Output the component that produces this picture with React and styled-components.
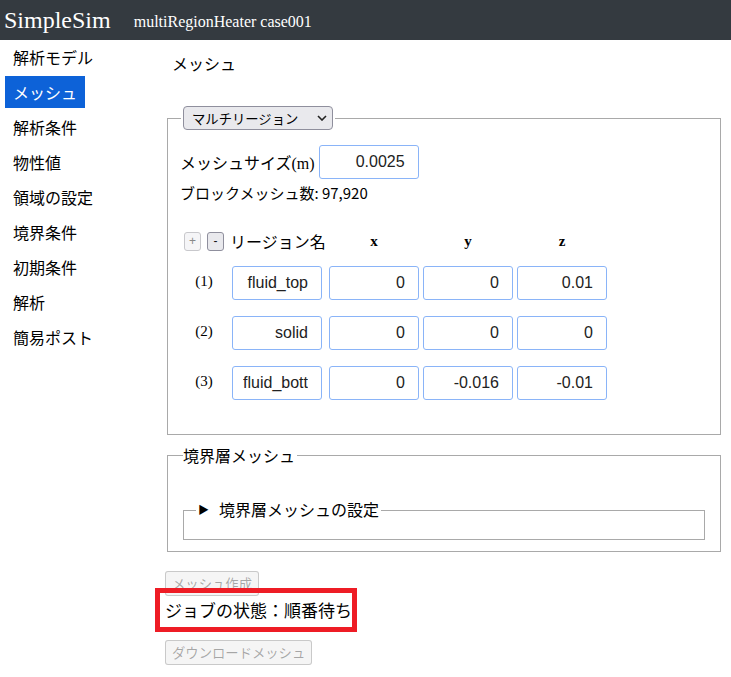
import React from 'react';
import styled, { createGlobalStyle } from 'styled-components';

const GlobalStyle = createGlobalStyle`
  body {
    margin: 0;
    background: #fff;
    font-family: "Noto Sans CJK JP", "Liberation Sans", sans-serif;
    color: #000;
  }
`;

const menuItems = [
  '解析モデル',
  'メッシュ',
  '解析条件',
  '物性値',
  '領域の設定',
  '境界条件',
  '初期条件',
  '解析',
  '簡易ポスト',
];

const regions = [
  { name: 'fluid_top', x: '0', y: '0', z: '0.01' },
  { name: 'solid', x: '0', y: '0', z: '0' },
  { name: 'fluid_bott', x: '0', y: '-0.016', z: '-0.01' },
];

function App() {
  return (
    <>
      <GlobalStyle />
      <Header>
        <Brand>SimpleSim</Brand>
        <CaseName>multiRegionHeater case001</CaseName>
      </Header>
      <Layout>
        <Sidebar>
          {menuItems.map((item) => (
            <MenuItem key={item} active={item === 'メッシュ'}>
              {item}
            </MenuItem>
          ))}
        </Sidebar>
        <Main>
          <Title>メッシュ</Title>
          <RegionSet>
            <SelectLegend>
              <SelectWrap>
                <Select defaultValue="multi">
                  <option value="multi">マルチリージョン</option>
                  <option value="single">シングルリージョン</option>
                </Select>
                <Chevron width="10" height="6" viewBox="0 0 10 6">
                  <path d="M1 1l4 4 4-4" fill="none" stroke="#222" strokeWidth="1.6" />
                </Chevron>
              </SelectWrap>
            </SelectLegend>
            <SizeRow>
              <span>
                メッシュサイズ<Serif>(m)</Serif>
              </span>
              <NumInput defaultValue="0.0025" width={100} />
            </SizeRow>
            <Count>ブロックメッシュ数: 97,920</Count>
            <RegionGrid>
              <HeadLabel>
                <SmallButton disabled>+</SmallButton>
                <SmallButton>-</SmallButton>
                <span>リージョン名</span>
              </HeadLabel>
              <AxisHead>x</AxisHead>
              <AxisHead>y</AxisHead>
              <AxisHead>z</AxisHead>
              {regions.map((r, i) => (
                <React.Fragment key={r.name}>
                  <RowNum>({i + 1})</RowNum>
                  <NumInput defaultValue={r.name} width={90} />
                  <NumInput defaultValue={r.x} width={90} />
                  <NumInput defaultValue={r.y} width={90} />
                  <NumInput defaultValue={r.z} width={90} />
                </React.Fragment>
              ))}
            </RegionGrid>
          </RegionSet>
          <LayerSet>
            <TextLegend>境界層メッシュ</TextLegend>
            <InnerSet>
              <InnerLegend>
                <Triangle>▶</Triangle>境界層メッシュの設定
              </InnerLegend>
            </InnerSet>
          </LayerSet>
          <GrayButton disabled>メッシュ作成</GrayButton>
          <Status>ジョブの状態：順番待ち</Status>
          <GrayButton disabled>ダウンロードメッシュ</GrayButton>
        </Main>
      </Layout>
    </>
  );
}

const Header = styled.header`
  height: 40px;
  background: #343a40;
  color: #fff;
  display: flex;
  align-items: center;
  padding-left: 4px;
  font-family: "Liberation Serif", serif;
`;

const Brand = styled.span`
  font-size: 24px;
  margin-right: 23px;
`;

const CaseName = styled.span`
  font-size: 16px;
  padding-top: 3px;
`;

const Layout = styled.div`
  display: grid;
  grid-template-columns: 165px 1fr;
`;

const Sidebar = styled.nav`
  display: flex;
  flex-direction: column;
  gap: 3px;
  padding: 1px 0 0 5px;
`;

const MenuItem = styled.div`
  align-self: flex-start;
  height: 32px;
  line-height: 32px;
  padding: 0 8px;
  font-size: 16px;
  background: ${(p) => (p.active ? '#0d62d8' : 'transparent')};
  color: ${(p) => (p.active ? '#fff' : '#000')};
`;

const Main = styled.main`
  display: flex;
  flex-direction: column;
  align-items: flex-start;
  padding-right: 10px;
`;

const Title = styled.div`
  font-size: 16px;
  line-height: 22px;
  margin: 12px 0 0 7px;
`;

const Fieldset = styled.fieldset`
  align-self: stretch;
  margin: 0 0 0 2px;
  border: 1px solid #a9a9a9;
  min-width: 0;
`;

const RegionSet = styled(Fieldset)`
  margin-top: 32px;
  padding: 15px 12px 34px 12px;
`;

const SelectLegend = styled.legend`
  padding: 0 2px;
  margin-left: 1px;
  line-height: 0;
`;

const SelectWrap = styled.span`
  position: relative;
  display: inline-block;
`;

const Select = styled.select`
  appearance: none;
  width: 150px;
  height: 24px;
  padding: 0 0 0 8px;
  font-family: "Noto Sans CJK JP", sans-serif;
  font-size: 13.33px;
  color: #000;
  background: #e9e9ed;
  border: 1px solid #8f8f9d;
  border-radius: 4px;
`;

const Chevron = styled.svg`
  position: absolute;
  right: 6px;
  top: 9px;
  pointer-events: none;
`;

const SizeRow = styled.div`
  display: flex;
  align-items: center;
  gap: 4px;
  font-size: 16px;
`;

const Serif = styled.span`
  font-family: "Liberation Serif", serif;
`;

const NumInput = styled.input`
  box-sizing: border-box;
  width: ${(p) => p.width}px;
  height: 34px;
  padding: 0 13px 0 10px;
  text-align: right;
  font-family: "Liberation Sans", sans-serif;
  font-size: 16px;
  color: #222;
  border: 1px solid #8ab4f8;
  border-radius: 3px;
  background: #fff;
  outline: none;
`;

const Count = styled.div`
  font-size: 15px;
  line-height: 20px;
  margin-top: 4px;
`;

const RegionGrid = styled.div`
  display: grid;
  grid-template-columns: 52px 97px 94px 94px 90px;
  row-gap: 16px;
  align-items: center;
  margin-top: 26px;
`;

const HeadLabel = styled.div`
  grid-column: span 2;
  display: flex;
  align-items: center;
  gap: 6px;
  padding-left: 4px;
  font-size: 16px;
  margin-bottom: -3px;
`;

const SmallButton = styled.button`
  width: 17px;
  height: 19px;
  padding: 0;
  font-size: 12px;
  line-height: 1;
  border-radius: 3px;
  border: 1px solid ${(p) => (p.disabled ? '#c8c8cc' : '#8f8f9d')};
  background: ${(p) => (p.disabled ? '#f5f5f7' : '#e9e9ed')};
  color: ${(p) => (p.disabled ? '#888' : '#111')};
  font-family: "Liberation Sans", sans-serif;
`;

const AxisHead = styled.div`
  width: 90px;
  text-align: center;
  font-family: "Liberation Serif", serif;
  font-weight: bold;
  font-size: 15px;
  margin-bottom: -3px;
`;

const RowNum = styled.div`
  text-align: center;
  font-family: "Liberation Serif", serif;
  font-size: 15px;
  margin-right: 4px;
  padding-bottom: 4px;
`;

const LayerSet = styled(Fieldset)`
  margin-top: 9px;
  padding: 32px 15px 11px 15px;
`;

const TextLegend = styled.legend`
  padding: 0 2px 0 0;
  font-size: 16px;
  line-height: 22px;
`;

const InnerSet = styled(Fieldset)`
  margin: 0;
  padding: 0 0 17px 0;
`;

const InnerLegend = styled.legend`
  margin-left: 12px;
  padding: 0 2px;
  font-size: 16px;
  line-height: 22px;
`;

const Triangle = styled.span`
  font-size: 11px;
  margin-right: 10px;
  position: relative;
  top: -2px;
`;

const GrayButton = styled.button`
  height: 25px;
  padding: 0 6px;
  font-family: "Noto Sans CJK JP", sans-serif;
  font-size: 13.33px;
  color: rgba(16, 16, 16, 0.35);
  background: rgba(239, 239, 239, 0.6);
  border: 1px solid rgba(118, 118, 118, 0.35);
  border-radius: 3px;
  &:first-of-type {
    margin-top: 19px;
  }
`;

const Status = styled.div`
  box-sizing: border-box;
  width: 182px;
  height: 24px;
  line-height: 24px;
  margin: 2px 0 18px 0;
  font-size: 17px;
  white-space: nowrap;
  outline: 5px solid #ee1c25;
  outline-offset: 5px;
  & + button {
    margin-top: 0;
  }
`;

export default App;
